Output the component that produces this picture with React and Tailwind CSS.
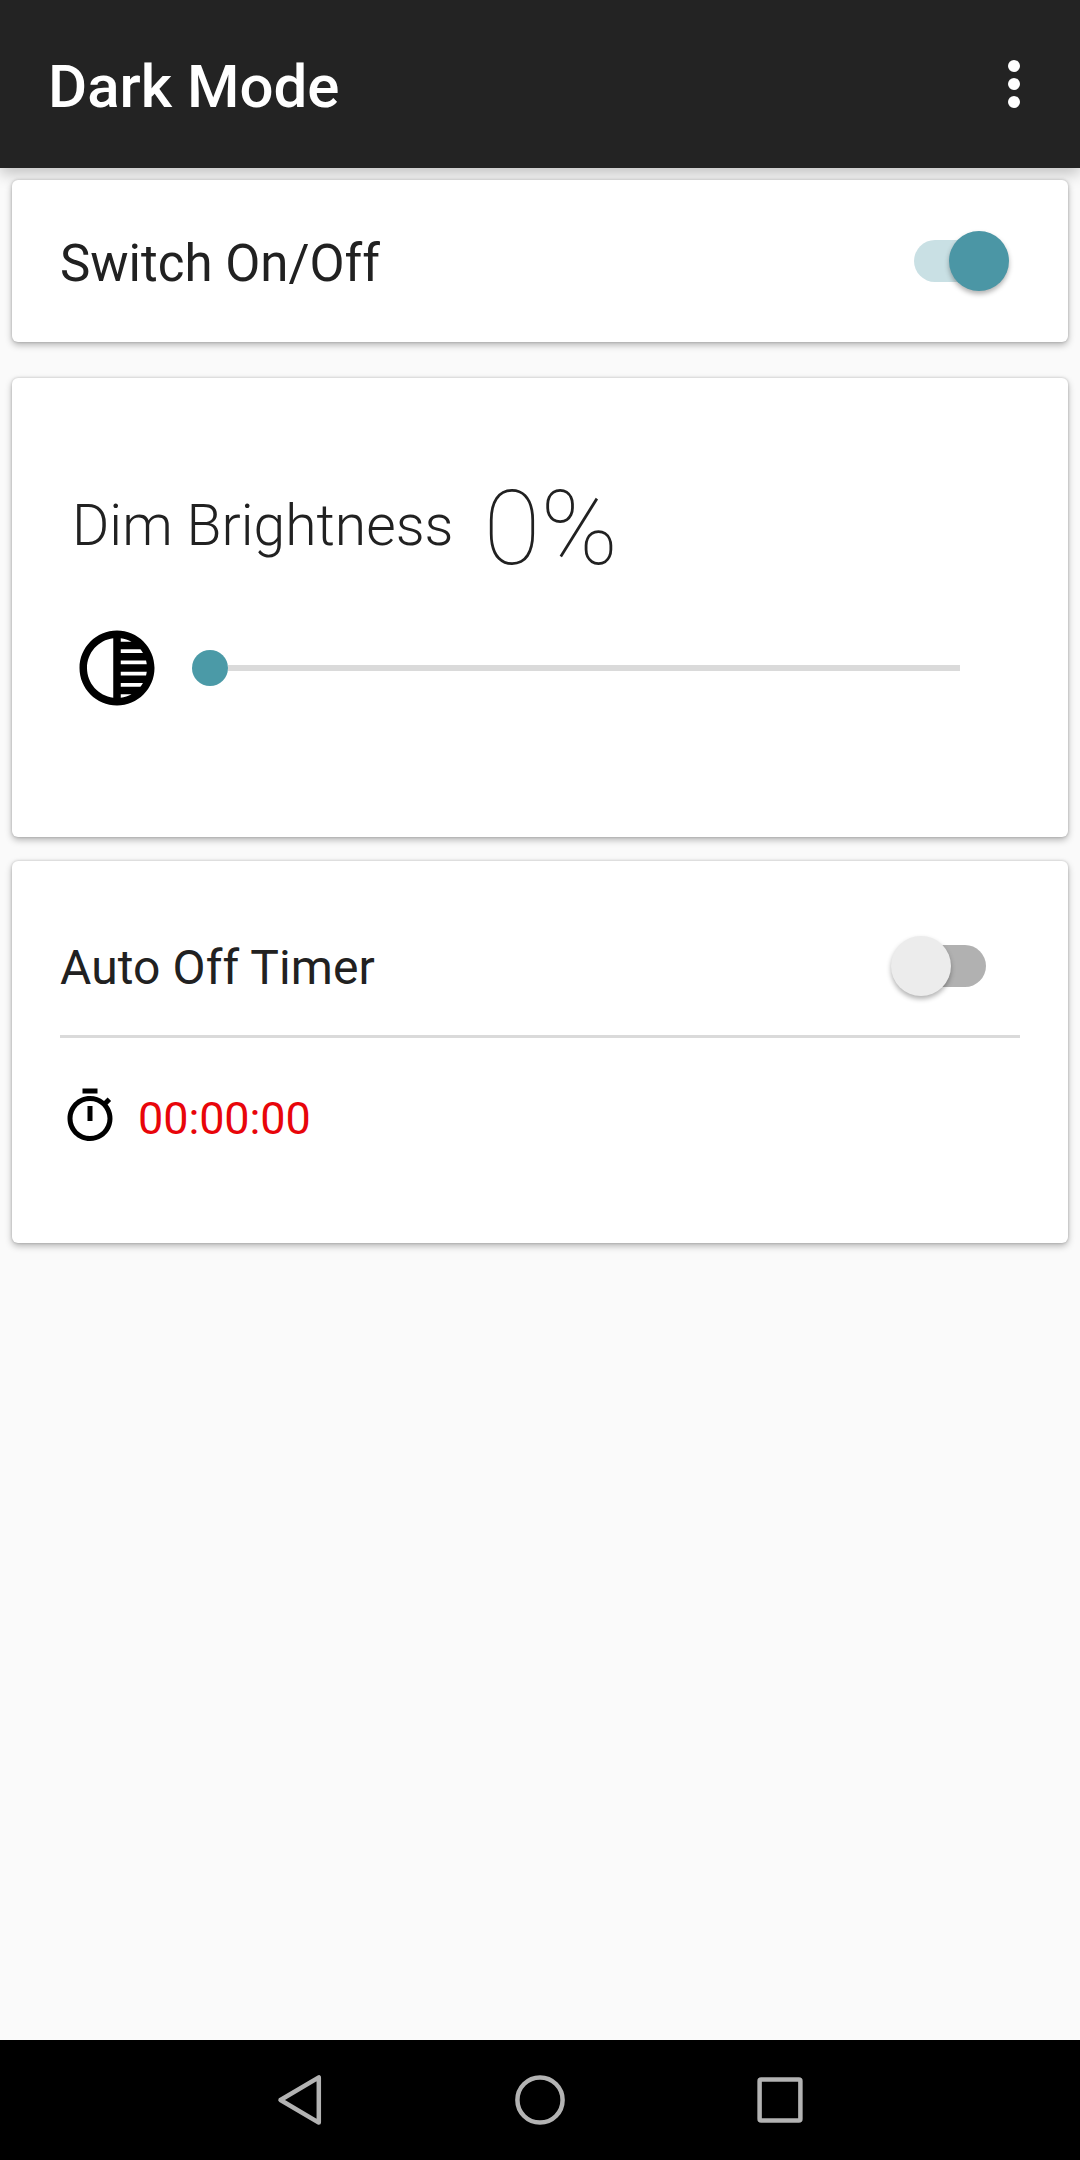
import React from "react";
import { MdTonality, MdOutlineTimer } from "react-icons/md";

// White card used for every settings block
const Card = ({ className, children }) => (
  <section
    className={`${className} mx-3 bg-white rounded-md shadow-[0_3px_7px_rgba(0,0,0,0.28),0_0_3px_rgba(0,0,0,0.2)]`}
  >
    {children}
  </section>
);

// Material style toggle
const Toggle = ({ on, label }) => (
  <button
    role="switch"
    aria-checked={on}
    aria-label={label}
    className={`relative flex w-24 h-[60px] items-center ${
      on ? "justify-start" : "justify-end"
    }`}
  >
    <span
      className={`w-[84px] h-[42px] rounded-full ${
        on ? "bg-[#c9e0e4]" : "bg-[#b1b1b1]"
      }`}
    />
    <span
      className={`absolute top-0 size-[60px] rounded-full shadow-[0_3px_5px_rgba(0,0,0,0.3)] ${
        on ? "right-px bg-[#4b96a5]" : "left-px bg-[#ececec]"
      }`}
    />
  </button>
);

const Header = () => (
  <header className="flex h-42 items-center justify-between bg-[#232323] pl-12 pr-15 text-white shadow-[0_6px_14px_rgba(0,0,0,0.22)]">
    <h1 className="pt-[5px] text-[60px] leading-none font-medium">Dark Mode</h1>
    <button className="flex flex-col gap-1.5" aria-label="More options">
      <span className="size-3 rounded-full bg-white" />
      <span className="size-3 rounded-full bg-white" />
      <span className="size-3 rounded-full bg-white" />
    </button>
  </header>
);

const NavBar = () => (
  <nav className="flex h-30 items-center justify-center gap-45 bg-black">
    <svg className="size-15" viewBox="0 0 60 60" fill="none" stroke="#b3b3b3" strokeWidth="4.5" strokeLinejoin="round">
      <path d="M10.5 30 48.8 7.4v45.2z" />
    </svg>
    <svg className="size-15" viewBox="0 0 60 60" fill="none" stroke="#b3b3b3" strokeWidth="4.5">
      <circle cx="30" cy="30" r="22.6" />
    </svg>
    <svg className="size-15" viewBox="0 0 60 60" fill="none" stroke="#b3b3b3" strokeWidth="4.5">
      <rect x="9.6" y="9.6" width="40.8" height="40.8" rx="1.5" />
    </svg>
  </nav>
);

const App = () => {
  return (
    <div className="flex h-[2160px] w-[1080px] flex-col bg-[#fafafa] font-['Roboto',sans-serif] text-[#212121]">
      <Header />

      <main className="flex-1 pt-3">
        {/* Main switch */}
        <Card className="flex h-[162px] items-center justify-between pl-12 pr-[58px]">
          <span className="pt-[5px] text-[51px] leading-none">Switch On/Off</span>
          <Toggle on label="Switch On/Off" />
        </Card>

        {/* Brightness */}
        <Card className="mt-9 h-[459px] pt-[90px] pl-15">
          <div className="flex h-30 items-center">
            <span className="pb-[5px] text-[57px] leading-none font-light">Dim Brightness</span>
            <span className="ml-[30px] pt-[2px] text-[104px] leading-none font-thin">0%</span>
          </div>
          <div className="mt-[35px] flex items-center">
            <MdTonality className="size-[90px] text-black" />
            <div className="ml-[30px] flex w-[768px] items-center">
              <span className="size-9 rounded-full bg-[#4b9aa7]" />
              <span className="h-1.5 flex-1 bg-[#dadada]" />
            </div>
          </div>
        </Card>

        {/* Auto off timer */}
        <Card className="mt-6 h-[382px] px-12 pt-[75px]">
          <div className="flex items-center justify-between pr-[34px]">
            <span className="pt-1 text-[48px] leading-none tracking-[0.1px]">Auto Off Timer</span>
            <Toggle on={false} label="Auto Off Timer" />
          </div>
          <hr className="mt-[39px] h-[3px] border-0 bg-[#dadada]" />
          <div className="mt-12 flex items-center">
            <MdOutlineTimer className="size-15 text-black" />
            <span className="ml-[18px] pt-[5px] text-[45px] leading-none tracking-[-0.1px] text-[#e8050a]">00:00:00</span>
          </div>
        </Card>
      </main>

      <NavBar />
    </div>
  );
};

export default App;
